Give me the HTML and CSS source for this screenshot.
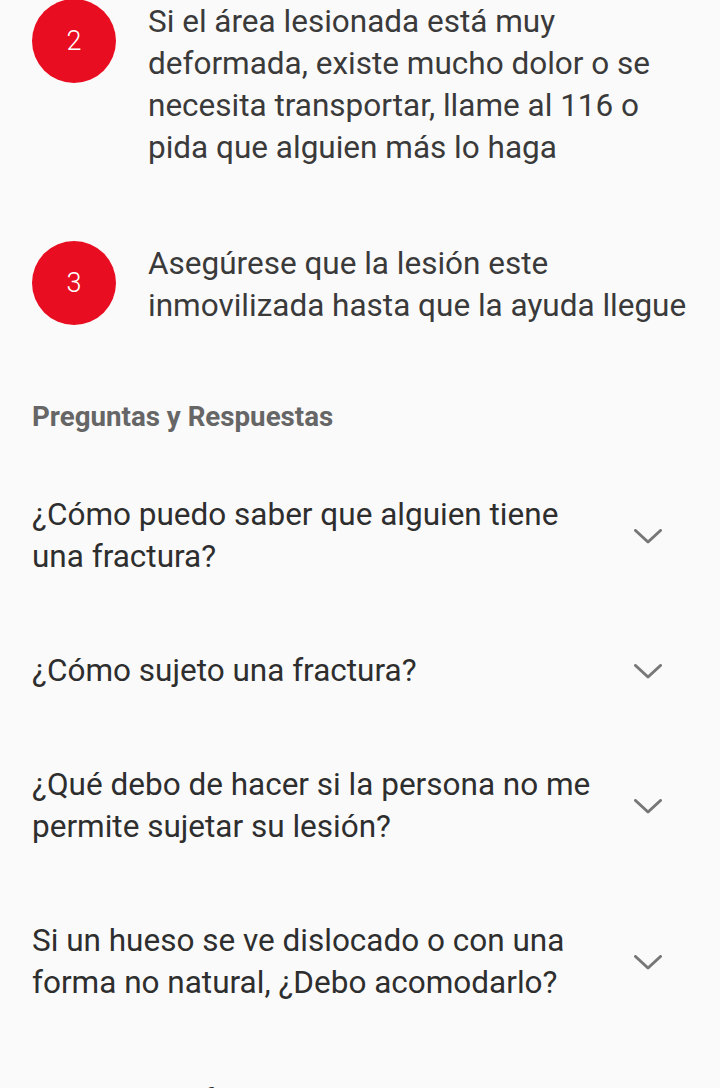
FILE: index.html
```html
<!DOCTYPE html>
<html lang="es">
<head>
<meta charset="utf-8">
<title>Fracturas</title>
<link rel="stylesheet" href="styles.css">
</head>
<body>
<main class="page">
  <section class="steps">
    <div class="step">
      <div class="step-num">2</div>
      <p class="step-text">Si el área lesionada está muy deformada, existe mucho dolor o se necesita transportar, llame al 116 o pida que alguien más lo haga</p>
    </div>
    <div class="step">
      <div class="step-num">3</div>
      <p class="step-text">Asegúrese que la lesión este inmovilizada hasta que la ayuda llegue</p>
    </div>
  </section>

  <h2 class="faq-title">Preguntas y Respuestas</h2>

  <section class="faq">
    <div class="faq-item">
      <p class="faq-q">¿Cómo puedo saber que alguien tiene una fractura?</p>
      <svg class="chev" viewBox="0 0 28 15" width="28" height="15"><path d="M1.5 1.5 L14 13 L26.5 1.5"/></svg>
    </div>
    <div class="faq-item">
      <p class="faq-q">¿Cómo sujeto una fractura?</p>
      <svg class="chev" viewBox="0 0 28 15" width="28" height="15"><path d="M1.5 1.5 L14 13 L26.5 1.5"/></svg>
    </div>
    <div class="faq-item">
      <p class="faq-q">¿Qué debo de hacer si la persona no me permite sujetar su lesión?</p>
      <svg class="chev" viewBox="0 0 28 15" width="28" height="15"><path d="M1.5 1.5 L14 13 L26.5 1.5"/></svg>
    </div>
    <div class="faq-item">
      <p class="faq-q">Si un hueso se ve dislocado o con una forma no natural, ¿Debo acomodarlo?</p>
      <svg class="chev" viewBox="0 0 28 15" width="28" height="15"><path d="M1.5 1.5 L14 13 L26.5 1.5"/></svg>
    </div>
    <div class="faq-item faq-item-last">
      <p class="faq-q">¿Puede una fractura sanar sin llevar yeso?</p>
      <svg class="chev" viewBox="0 0 28 15" width="28" height="15"><path d="M1.5 1.5 L14 13 L26.5 1.5"/></svg>
    </div>
  </section>
</main>
</body>
</html>
```

FILE: styles.css
```css
* { box-sizing: border-box; }

html, body {
  margin: 0;
  padding: 0;
  background: #fafafa;
  height: 1088px;
  overflow: hidden;
}

body {
  font-family: Roboto, "Noto Sans", sans-serif;
  color: #333333;
}

.page {
  margin-top: -1px;
}

.steps {
  display: flex;
  flex-direction: column;
  gap: 72px;
  padding: 0 20px 0 32px;
}

.step {
  display: flex;
  align-items: flex-start;
  gap: 32px;
}

.step-num {
  flex: 0 0 84px;
  width: 84px;
  height: 84px;
  border-radius: 50%;
  background: #e90d21;
  color: #ffffff;
  font-size: 27px;
  font-weight: 300;
  display: flex;
  align-items: center;
  justify-content: center;
}

.step-text {
  margin: 2px 0 0;
  font-size: 31.5px;
  line-height: 42px;
  font-weight: 400;
  color: #3a3a3a;
}

.faq-title {
  margin: 74px 0 0;
  padding: 0 32px;
  font-size: 27.7px;
  line-height: 32px;
  font-weight: 700;
  color: #666666;
}

.faq {
  margin-top: 61px;
  display: flex;
  flex-direction: column;
  gap: 72px;
}

.faq-item {
  display: flex;
  align-items: center;
  padding: 0 58px 0 32px;
}

.faq-item-last {
  margin-top: 4px;
}

.faq-q {
  flex: 1;
  margin: 0 30px 0 0;
  font-size: 31.5px;
  line-height: 42px;
  color: #2e2e2e;
}

.chev {
  flex: 0 0 28px;
  fill: none;
  stroke: #777777;
  stroke-width: 3;
  stroke-linecap: round;
  stroke-linejoin: round;
}
```
